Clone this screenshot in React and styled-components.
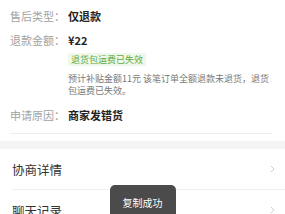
import React from "react";
import styled, { createGlobalStyle } from "styled-components";

const Global = createGlobalStyle`
  html, body { margin: 0; padding: 0; background: #fff; }
  body { font-family: "Noto Sans CJK SC", "Noto Sans", sans-serif; overflow: hidden; }
`;

const Page = styled.div`
  width: 285px;
  height: 214px;
  overflow: hidden;
  background: #fff;
`;

const InfoSection = styled.section`
  padding: 4px 0 7px 10px;
  background: #fff;
`;

const InfoBody = styled.div`
  padding-bottom: 6px;
  margin-right: 13px;
  border-bottom: 1px solid #eeeeee;
`;

const Row = styled.div`
  display: flex;
  align-items: center;
  height: 24px;
`;

const Label = styled.span`
  width: 58px;
  flex: none;
  font-size: 11px;
  color: #a3a3a3;
`;

const Value = styled.span`
  font-size: 11px;
  font-weight: 700;
  color: #222;
`;

const Extra = styled.div`
  display: flex;
  flex-direction: column;
  align-items: flex-start;
  padding-left: 58px;
`;

const Badge = styled.span`
  display: block;
  margin-top: 1px;
  padding: 0 3px;
  height: 13px;
  line-height: 13px;
  font-size: 9px;
  color: #5bab3f;
  background: #f0f8ec;
`;

const Note = styled.p`
  margin: 7px 0 6px;
  font-size: 9px;
  line-height: 12px;
  color: #777;
`;

const Gap = styled.div`
  height: 8px;
  background: #f4f4f4;
`;

const List = styled.div`
  padding-left: 12px;
`;

const ListItem = styled.div`
  display: flex;
  align-items: center;
  justify-content: space-between;
  height: 40px;
  padding-right: 10px;
  border-bottom: ${(p) => (p.$last ? "none" : "1px solid #f0f0f0")};
  font-size: 12.5px;
  color: #333;
`;

const Toast = styled.div`
  position: fixed;
  top: 185px;
  left: 50%;
  transform: translateX(-50%);
  width: 66px;
  height: 40px;
  box-sizing: border-box;
  padding-top: 12px;
  border-radius: 5px;
  background: #4b4b4b;
  color: #fff;
  font-size: 10px;
  line-height: 12px;
  text-align: center;
`;

const Chevron = () => (
  <svg width="5" height="8" viewBox="0 0 5 8" fill="none">
    <polyline points="1,1 4,4 1,7" stroke="#cfcfcf" strokeWidth="1" />
  </svg>
);

export default function App() {
  return (
    <Page>
      <Global />
      <InfoSection>
        <InfoBody>
          <Row>
            <Label>售后类型：</Label>
            <Value>仅退款</Value>
          </Row>
          <Row>
            <Label>退款金额：</Label>
            <Value>¥22</Value>
          </Row>
          <Extra>
            <Badge>退货包运费已失效</Badge>
            <Note>预计补贴金额11元 该笔订单全额退款未退货，退货包运费已失效。</Note>
          </Extra>
          <Row>
            <Label>申请原因：</Label>
            <Value>商家发错货</Value>
          </Row>
        </InfoBody>
      </InfoSection>
      <Gap />
      <List>
        <ListItem>
          <span>协商详情</span>
          <Chevron />
        </ListItem>
        <ListItem $last>
          <span>聊天记录</span>
          <Chevron />
        </ListItem>
      </List>
      <Toast>复制成功</Toast>
    </Page>
  );
}
